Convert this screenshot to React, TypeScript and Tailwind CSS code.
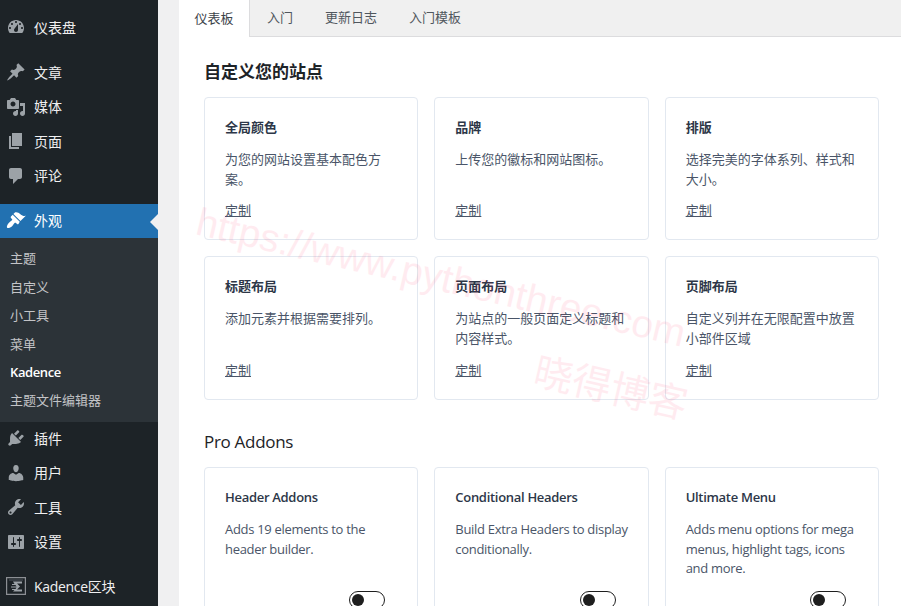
const font = 'font-["Open_Sans","Noto_Sans_CJK_SC",sans-serif]'

const icons: Record<string, string> = {
  dashboard: 'M3.76 16h12.48c1.1-1.37 1.76-3.11 1.76-5 0-4.42-3.58-8-8-8s-8 3.58-8 8c0 1.89.66 3.63 1.76 5zM10 4c.55 0 1 .45 1 1s-.45 1-1 1-1-.45-1-1 .45-1 1-1zM6 6c.55 0 1 .45 1 1s-.45 1-1 1-1-.45-1-1 .45-1 1-1zm8 0c.55 0 1 .45 1 1s-.45 1-1 1-1-.45-1-1 .45-1 1-1zm-5.37 5.55L12 7v6c0 1.1-.9 2-2 2s-2-.9-2-2c0-.57.24-1.08.63-1.45zM4 10c.55 0 1 .45 1 1s-.45 1-1 1-1-.45-1-1 .45-1 1-1zm12 0c.55 0 1 .45 1 1s-.45 1-1 1-1-.45-1-1 .45-1 1-1z',
  post: 'M10.44 3.02l1.82-1.82 6.36 6.35-1.83 1.82c-1.05-.68-2.48-.57-3.41.36l-.75.75c-.92.93-1.04 2.35-.35 3.41l-1.83 1.82-2.41-2.41-2.8 2.79c-.42.42-3.38 2.71-3.8 2.29s1.86-3.39 2.28-3.81l2.79-2.79L4.1 9.36l1.83-1.82c1.05.69 2.48.57 3.4-.36l.75-.75c.93-.92 1.05-2.35.36-3.41z',
  media: 'M13 11V4c0-.55-.45-1-1-1h-1.67L9 1H5L3.67 3H2c-.55 0-1 .45-1 1v7c0 .55.45 1 1 1h10c.55 0 1-.45 1-1zM7 4.5c1.38 0 2.5 1.12 2.5 2.5S8.38 9.5 7 9.5 4.5 8.38 4.5 7 5.62 4.5 7 4.5zM14 6h5v10.5c0 1.38-1.12 2.5-2.5 2.5S14 17.88 14 16.5s1.12-2.5 2.5-2.5c.17 0 .34.02.5.05V9h-3V6zm-4 8.05V13h2v3.5c0 1.38-1.12 2.5-2.5 2.5S7 17.88 7 16.5 8.12 14 9.5 14c.17 0 .34.02.5.05z',
  page: 'M6 15V2h10v13H6zm-1 1h8v2H3V5h2v11z',
  comments: 'M5 2h9c1.1 0 2 .9 2 2v7c0 1.1-.9 2-2 2h-2l-5 5v-5H5c-1.1 0-2-.9-2-2V4c0-1.1.9-2 2-2z',
  appearance: 'M14.48 11.06L7.41 3.99l1.5-1.5c.5-.56 2.3-.47 3.51.32 1.21.8 1.43 1.28 2.91 2.1 1.18.64 2.45 1.26 4.45.85zm-.71.71L6.7 4.7 4.93 6.47c-.39.39-.39 1.02 0 1.41l1.06 1.06c.39.39.39 1.03 0 1.42-.6.6-1.43 1.11-2.21 1.69-.35.26-.7.53-1.01.84-1.43 1.43-2.5 4.01-1.62 4.89.87.87 3.46-.2 4.89-1.63.31-.31.58-.66.84-1.01.58-.78 1.09-1.61 1.69-2.21.39-.39 1.03-.39 1.42 0l1.06 1.06c.39.39 1.02.39 1.41 0z',
  plugins: 'M13.11 4.36L9.87 7.6 8 5.73l3.24-3.24c.35-.34 1.05-.2 1.56.32.52.51.66 1.21.31 1.55zm-8 1.77l.91-1.12 9.01 9.01-1.19.84c-.71.71-2.63 1.16-3.82 1.16H6.14L4.9 17.26c-.59.59-1.54.59-2.12 0-.59-.58-.59-1.53 0-2.12l1.24-1.24v-3.88c0-1.13.4-3.19 1.09-3.89zm7.26 3.97l3.24-3.24c.34-.35 1.04-.21 1.55.31.52.51.66 1.21.31 1.55l-3.24 3.25z',
  users: 'M10 9.25c-2.27 0-2.73-3.44-2.73-3.44C7 4.02 7.82 2 9.97 2c2.16 0 2.98 2.02 2.71 3.81 0 0-.41 3.44-2.68 3.44zm0 2.57L12.72 10c2.39 0 4.52 2.33 4.52 4.53v2.49s-3.65 1.13-7.24 1.13c-3.65 0-7.24-1.13-7.24-1.13v-2.49c0-2.25 1.94-4.48 4.47-4.48z',
  tools: 'M16.68 9.77c-1.34 1.34-3.3 1.67-4.95.99l-5.41 6.52c-.99.99-2.59.99-3.58 0s-.99-2.59 0-3.57l6.52-5.42c-.68-1.65-.35-3.61.99-4.95 1.28-1.28 3.12-1.62 4.72-1.06l-2.89 2.89 2.82 2.82 2.86-2.87c.53 1.58.18 3.39-1.08 4.65zM3.81 16.21c.4.39 1.04.39 1.43 0 .4-.4.4-1.04 0-1.43-.39-.4-1.03-.4-1.43 0-.39.39-.39 1.03 0 1.43z',
  settings: 'M18 16V4c0-.55-.45-1-1-1H3c-.55 0-1 .45-1 1v12c0 .55.45 1 1 1h14c.55 0 1-.45 1-1zM8 11h1c.55 0 1 .45 1 1s-.45 1-1 1H8v1.5c0 .28-.22.5-.5.5s-.5-.22-.5-.5V13H6c-.55 0-1-.45-1-1s.45-1 1-1h1V5.5c0-.28.22-.5.5-.5s.5.22.5.5V11zm5-2h-1c-.55 0-1-.45-1-1s.45-1 1-1h1V5.5c0-.28.22-.5.5-.5s.5.22.5.5V7h1c.55 0 1 .45 1 1s-.45 1-1 1h-1v5.5c0 .28-.22.5-.5.5s-.5-.22-.5-.5V9z',
}

function MenuItem({ icon, label, className = '', active = false }: { icon: string; label: string; className?: string; active?: boolean }) {
  return (
    <div className={`flex items-center h-[34px] pb-[2px] pl-[6px] text-[14px] relative ${active ? 'bg-[#2271b1] text-white' : 'text-[#f0f0f1]'} ${className}`}>
      <svg viewBox="0 0 20 20" className={`w-[20px] h-[20px] ${active ? 'fill-white' : 'fill-[#9ca2a7]'}`} fillRule="evenodd">
        <path d={icons[icon]} />
      </svg>
      <span className="ml-[8px]">{label}</span>
      {active && (
        <span className="absolute right-0 top-[10px] border-y-[8px] border-r-[8px] border-y-transparent border-r-[#f0f0f1]" />
      )}
    </div>
  )
}

function Sidebar() {
  return (
    <aside className="w-[158px] shrink-0 bg-[#1d2327] flex flex-col">
      <MenuItem icon="dashboard" label="仪表盘" className="mt-[11px] mb-[11px]" />
      <MenuItem icon="post" label="文章" />
      <MenuItem icon="media" label="媒体" className="h-[35px]" />
      <MenuItem icon="page" label="页面" />
      <MenuItem icon="comments" label="评论" className="h-[35px]" />
      <div className="h-[10px]" />
      <MenuItem icon="appearance" label="外观" active />
      <div className="bg-[#2c3338] h-[184px] pt-[7px] flex flex-col text-[13px] text-[#c3c4c7]">
        {['主题', '自定义', '小工具', '菜单'].map((s) => (
          <div key={s} className="h-[28.4px] pl-[10px] flex items-center">{s}</div>
        ))}
        <div className="h-[28.4px] pl-[10px] flex items-center font-semibold text-white tracking-[-0.4px]">Kadence</div>
        <div className="h-[28.4px] pl-[10px] flex items-center">主题文件编辑器</div>
      </div>
      <MenuItem icon="plugins" label="插件" />
      <MenuItem icon="users" label="用户" className="h-[35px]" />
      <MenuItem icon="tools" label="工具" />
      <MenuItem icon="settings" label="设置" className="h-[35px]" />
      <div className="flex items-center h-[34px] mt-[10px] pb-[2px] pl-[6px] text-[14px] text-[#f0f0f1]">
        <svg viewBox="0 0 20 18" className="w-[20px] h-[18px]">
          <path d="M.6.6h18.8v16.8H.6z" fill="none" stroke="#8c8f94" strokeWidth="1.2" />
          <path d="M3 3h14" stroke="#50575e" strokeWidth="1" />
          <path d="M7 4.5h9v2h-5l3 3-3 3h5v2H7l1.5-1.5H6v-1h3.5l1-1.5H5V9.5h5.5l-1-1.5H6V7h2.5z" fill="#9ca2a7" />
        </svg>
        <span className="ml-[8px] tracking-[-0.3px]">Kadence区块</span>
      </div>
    </aside>
  )
}

function Card({ title, desc, link, toggle }: { title: string; desc: string; link?: string; toggle?: boolean }) {
  return (
    <div className={`bg-white border border-[#e2e8f0] rounded-[4px] px-[20px] pt-[19px] flex flex-col ${toggle ? 'h-[160px] tracking-[-0.3px]' : 'h-full'}`}>
      <h3 className="text-[13px] leading-[20px] font-semibold text-[#2d3748]">{title}</h3>
      <p className="mt-[13px] text-[13px] leading-[19.5px] text-[#4a5568]">{desc}</p>
      {link && <a className="mt-auto mb-[19px] text-[13px] leading-[19px] underline text-[#4a5568]">{link}</a>}
      {toggle && (
        <div className="mt-auto mb-[17px] self-end w-[36px] h-[18px] rounded-full border-[1.5px] border-[#1e1e1e] bg-white flex items-center pl-[2px] mr-[12px]">
          <span className="w-[12px] h-[12px] rounded-full bg-[#1e1e1e]" />
        </div>
      )}
    </div>
  )
}

export default function App() {
  return (
    <div className={`w-[901px] h-[606px] overflow-hidden flex relative bg-[#f0f0f1] ${font}`}>
      <Sidebar />
      <div className="w-[21px] shrink-0 bg-[#f0f0f1]" />
      <main className="flex-1 min-w-0 bg-white flex flex-col">
        <nav className="h-[37px] shrink-0 flex bg-[#f0f0f0] border-b border-[#dcdcde] text-[13px] text-[#50575e]">
          <div className="w-[71px] h-[37px] bg-white border-r border-[#dcdcde] flex items-center justify-center text-[#3c434a]">仪表板</div>
          <div className="ml-[17px] flex items-center">入门</div>
          <div className="ml-[32px] flex items-center">更新日志</div>
          <div className="ml-[32px] flex items-center">入门模板</div>
        </nav>
        <div className="pl-[25px] pr-[22px]">
          <h2 className="mt-[24px] text-[17px] leading-[22px] font-semibold text-[#1d2327]">自定义您的站点</h2>
          <div className="mt-[14px] grid grid-cols-3 grid-rows-[143px_144px] gap-x-[16px] gap-y-[16px]">
            <Card title="全局颜色" desc="为您的网站设置基本配色方案。" link="定制" />
            <Card title="品牌" desc="上传您的徽标和网站图标。" link="定制" />
            <Card title="排版" desc="选择完美的字体系列、样式和大小。" link="定制" />
            <Card title="标题布局" desc="添加元素并根据需要排列。" link="定制" />
            <Card title="页面布局" desc="为站点的一般页面定义标题和内容样式。" link="定制" />
            <Card title="页脚布局" desc="自定义列并在无限配置中放置小部件区域" link="定制" />
          </div>
          <h2 className="mt-[31px] text-[17px] leading-[22px] font-medium text-[#1d2327] tracking-[-0.3px]">Pro Addons</h2>
          <div className="mt-[14px] grid grid-cols-3 gap-x-[16px]">
            <Card title="Header Addons" desc="Adds 19 elements to the header builder." toggle />
            <Card title="Conditional Headers" desc="Build Extra Headers to display conditionally." toggle />
            <Card title="Ultimate Menu" desc="Adds menu options for mega menus, highlight tags, icons and more." toggle />
          </div>
        </div>
      </main>
      <div className="absolute left-[202px] top-[200px] text-[39px] leading-[44px] text-[#ff0040]/[0.08] font-['Liberation_Sans',sans-serif] whitespace-nowrap rotate-[13deg] origin-top-left pointer-events-none">https://www.pythonthree.com</div>
      <div className="absolute left-[540px] top-[348px] text-[39px] leading-[44px] text-[#ff0040]/[0.08] whitespace-nowrap rotate-[13deg] origin-top-left pointer-events-none">晓得博客</div>
    </div>
  )
}
